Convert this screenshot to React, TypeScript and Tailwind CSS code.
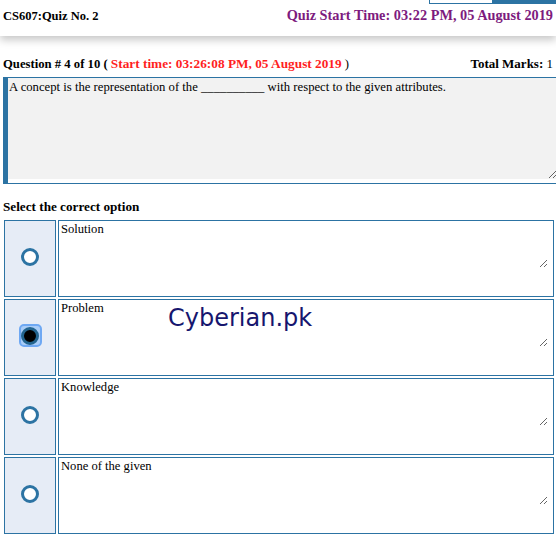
import React from "react";

const options = ["Solution", "Problem", "Knowledge", "None of the given"];
const selectedIndex = 1;

function Radio({ checked }: { checked: boolean }) {
  if (checked) {
    return (
      <div className="flex h-[23px] w-[23px] items-center justify-center rounded-[5px] border-2 border-[#6ea8f3] bg-[#a9cdf8]">
        <div className="h-[18px] w-[18px] rounded-full border-[3px] border-[#22648f] bg-black" />
      </div>
    );
  }
  return <div className="h-[18px] w-[18px] rounded-full border-[3px] border-[#2c73a3] bg-white" />;
}

export default function App() {
  return (
    <div className="relative h-[541px] w-[556px] overflow-hidden bg-white text-black font-['Liberation_Serif',serif]">
      <header className="relative flex h-[36px] items-baseline justify-between bg-white px-[3px] pt-[8px] font-bold leading-[15px] shadow-[0_4px_8px_rgba(0,0,0,0.22)]">
        <span className="text-[12.5px]">CS607:Quiz No. 2</span>
        <span className="text-[14.3px] text-[#7d1b7e]">Quiz Start Time: 03:22 PM, 05 August 2019</span>
        <div className="absolute right-0 top-0 flex h-[4px]">
          <div className="w-[64px] border border-t-0 border-[#2c73a3] bg-white" />
          <div className="w-[63px] bg-[#2c73a3]" />
        </div>
      </header>

      <div className="mt-[20px] flex h-[15px] items-baseline justify-between overflow-visible px-[3px] text-[13px] leading-[15px]">
        <span>
          <b className="text-[12.7px]">Question # 4 of 10 ( </b>
          <b className="text-[13.3px] text-[#ff1f1f]">Start time: 03:26:08 PM, 05 August 2019</b>
          <span className="text-[12.7px]"> )</span>
        </span>
        <span>
          <b>Total Marks: </b>1
        </span>
      </div>

      <div className="ml-[3px] mt-[6px] w-[554px] border-y border-l-[5px] border-[#2c73a3] pb-[4px]">
        <textarea
          readOnly
          className="block h-[101px] w-full resize-y bg-[#f2f2f2] pl-[1px] pt-[2px] text-[12.7px] leading-[15px] outline-none"
          defaultValue="A concept is the representation of the __________ with respect to the given attributes."
        />
      </div>

      <div className="mt-[15px] h-[15px] px-[3px] text-[13.2px] font-bold leading-[15px]">Select the correct option</div>

      <div className="mt-[6px] flex flex-col gap-[2px] pl-[4px]">
        {options.map((opt, i) => (
          <div key={opt} className="flex gap-[2px]">
            <div className="flex h-[77px] w-[52px] items-center justify-center border border-[#2c73a3] bg-[#e6ecf6] pb-[4px]">
              <Radio checked={i === selectedIndex} />
            </div>
            <div className="h-[77px] w-[496px] border border-[#2c73a3] bg-white">
              <textarea
                readOnly
                className="block h-[47px] w-[489px] resize-y bg-white pl-[2px] pt-[1px] text-[12.6px] leading-[15px] outline-none"
                defaultValue={opt}
              />
            </div>
          </div>
        ))}
      </div>

      <div className="absolute left-[168px] top-[306px] text-[24px] leading-[24px] text-[#16166e] font-['DejaVu_Sans',sans-serif]">
        Cyberian.pk
      </div>
    </div>
  );
}
